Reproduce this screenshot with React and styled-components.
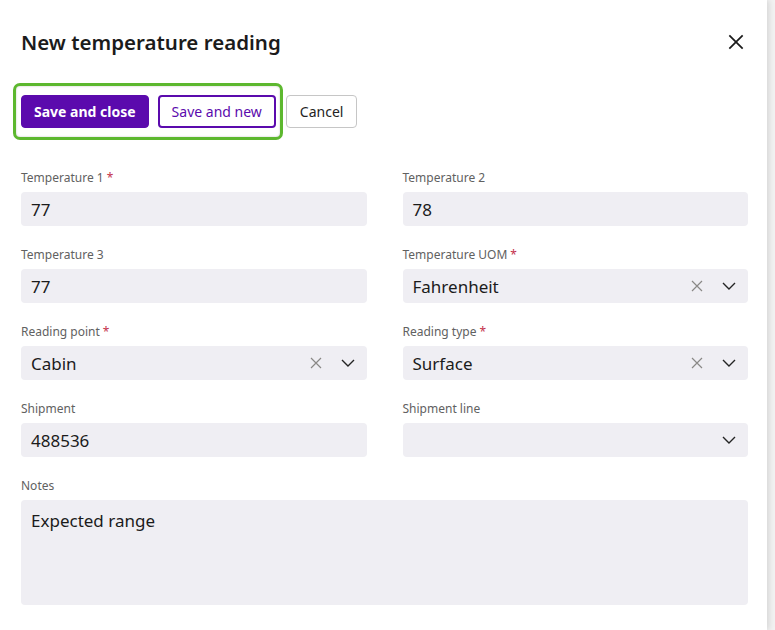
import React from 'react';
import styled, { createGlobalStyle } from 'styled-components';

const GlobalStyle = createGlobalStyle`
  html, body {
    margin: 0;
    padding: 0;
    background: #f2f2f2;
  }
  body {
    font-family: 'Noto Sans', 'Open Sans', sans-serif;
    color: #242424;
  }
`;

const Dialog = styled.div`
  width: 767px;
  height: 630px;
  background: #ffffff;
  box-shadow: 2px 0 6px rgba(0, 0, 0, 0.12);
  box-sizing: border-box;
  padding: 26px 19px 0 21px;
`;

const Header = styled.div`
  display: flex;
  align-items: center;
  justify-content: space-between;
  height: 32px;
`;

const Title = styled.h2`
  margin: 0;
  font-size: 20.5px;
  font-weight: 600;
  color: #1b1b1b;
`;

const CloseButton = styled.button`
  border: 0;
  background: none;
  padding: 0;
  width: 24px;
  height: 24px;
  display: flex;
  align-items: center;
  justify-content: center;
  color: #1b1b1b;
`;

const Toolbar = styled.div`
  display: flex;
  align-items: center;
  gap: 10px;
  margin-top: 37px;
`;

const FocusGroup = styled.div`
  position: relative;
  display: flex;
  gap: 9px;

  &::after {
    content: '';
    position: absolute;
    inset: -12px -7px -12px -8px;
    border: 3px solid #5db82f;
    border-radius: 7px;
    box-shadow: inset 0 0 2px rgba(0, 0, 0, 0.25);
    pointer-events: none;
  }
`;

const Button = styled.button`
  height: 33px;
  box-sizing: border-box;
  border-radius: 4px;
  font-family: inherit;
  font-size: 14px;
  padding: 0 ${({ $pad }) => $pad || 12}px;
  cursor: pointer;
  ${({ $variant }) =>
    $variant === 'primary'
      ? `background: #5b0aad; color: #fff; border: 1px solid #5b0aad; font-weight: 700;`
      : $variant === 'outline'
      ? `background: #fff; color: #5b0aad; border: 2px solid #5b0aad; font-weight: 400;`
      : `background: #fff; color: #242424; border: 1px solid #c6c6c6; font-weight: 400;`}
`;

const Form = styled.div`
  display: grid;
  grid-template-columns: 1fr 1fr;
  column-gap: 36px;
  row-gap: 21px;
  margin-top: 42px;
`;

const Field = styled.div`
  display: flex;
  flex-direction: column;
  gap: 6px;
  grid-column: ${({ $wide }) => ($wide ? '1 / -1' : 'auto')};
`;

const Label = styled.label`
  font-size: 12px;
  line-height: 16px;
  color: #616161;
`;

const Required = styled.span`
  color: #c4314b;
  margin-left: 3px;
`;

const Box = styled.div`
  height: ${({ $tall }) => ($tall ? 105 : 34)}px;
  box-sizing: border-box;
  background: #efeef3;
  border-radius: 4px;
  display: flex;
  align-items: ${({ $tall }) => ($tall ? 'flex-start' : 'center')};
  padding: ${({ $tall }) => ($tall ? '9px 10px' : '0 10px')};
  font-size: 17px;
  color: #1b1b1b;
`;

const Value = styled.span`
  flex: 1;
`;

const Icons = styled.div`
  display: flex;
  align-items: center;
  gap: 19px;
  margin-right: 2px;
`;

const XIcon = ({ size = 12, color = '#8a8886', stroke = 1.2 }) => (
  <svg width={size} height={size} viewBox="0 0 12 12">
    <path d="M1 1 L11 11 M11 1 L1 11" stroke={color} strokeWidth={stroke} fill="none" />
  </svg>
);

const Chevron = () => (
  <svg width="14" height="8" viewBox="0 0 14 8">
    <path d="M1 1 L7 7 L13 1" stroke="#242424" strokeWidth="1.4" fill="none" />
  </svg>
);

const fields = [
  { label: 'Temperature 1', required: true, value: '77' },
  { label: 'Temperature 2', value: '78' },
  { label: 'Temperature 3', value: '77' },
  { label: 'Temperature UOM', required: true, value: 'Fahrenheit', select: true, clear: true },
  { label: 'Reading point', required: true, value: 'Cabin', select: true, clear: true },
  { label: 'Reading type', required: true, value: 'Surface', select: true, clear: true },
  { label: 'Shipment', value: '488536' },
  { label: 'Shipment line', value: '', select: true },
];

export default function App() {
  return (
    <>
      <GlobalStyle />
      <Dialog>
        <Header>
          <Title>New temperature reading</Title>
          <CloseButton aria-label="Close">
            <XIcon size={16} color="#1b1b1b" stroke={1.3} />
          </CloseButton>
        </Header>
        <Toolbar>
          <FocusGroup>
            <Button $variant="primary">Save and close</Button>
            <Button $variant="outline">Save and new</Button>
          </FocusGroup>
          <Button $pad={13}>Cancel</Button>
        </Toolbar>
        <Form>
          {fields.map((f) => (
            <Field key={f.label}>
              <Label>
                {f.label}
                {f.required && <Required>*</Required>}
              </Label>
              <Box>
                <Value>{f.value}</Value>
                {f.select && (
                  <Icons>
                    {f.clear && <XIcon />}
                    <Chevron />
                  </Icons>
                )}
              </Box>
            </Field>
          ))}
          <Field $wide>
            <Label>Notes</Label>
            <Box $tall>
              <Value>Expected range</Value>
            </Box>
          </Field>
        </Form>
      </Dialog>
    </>
  );
}
